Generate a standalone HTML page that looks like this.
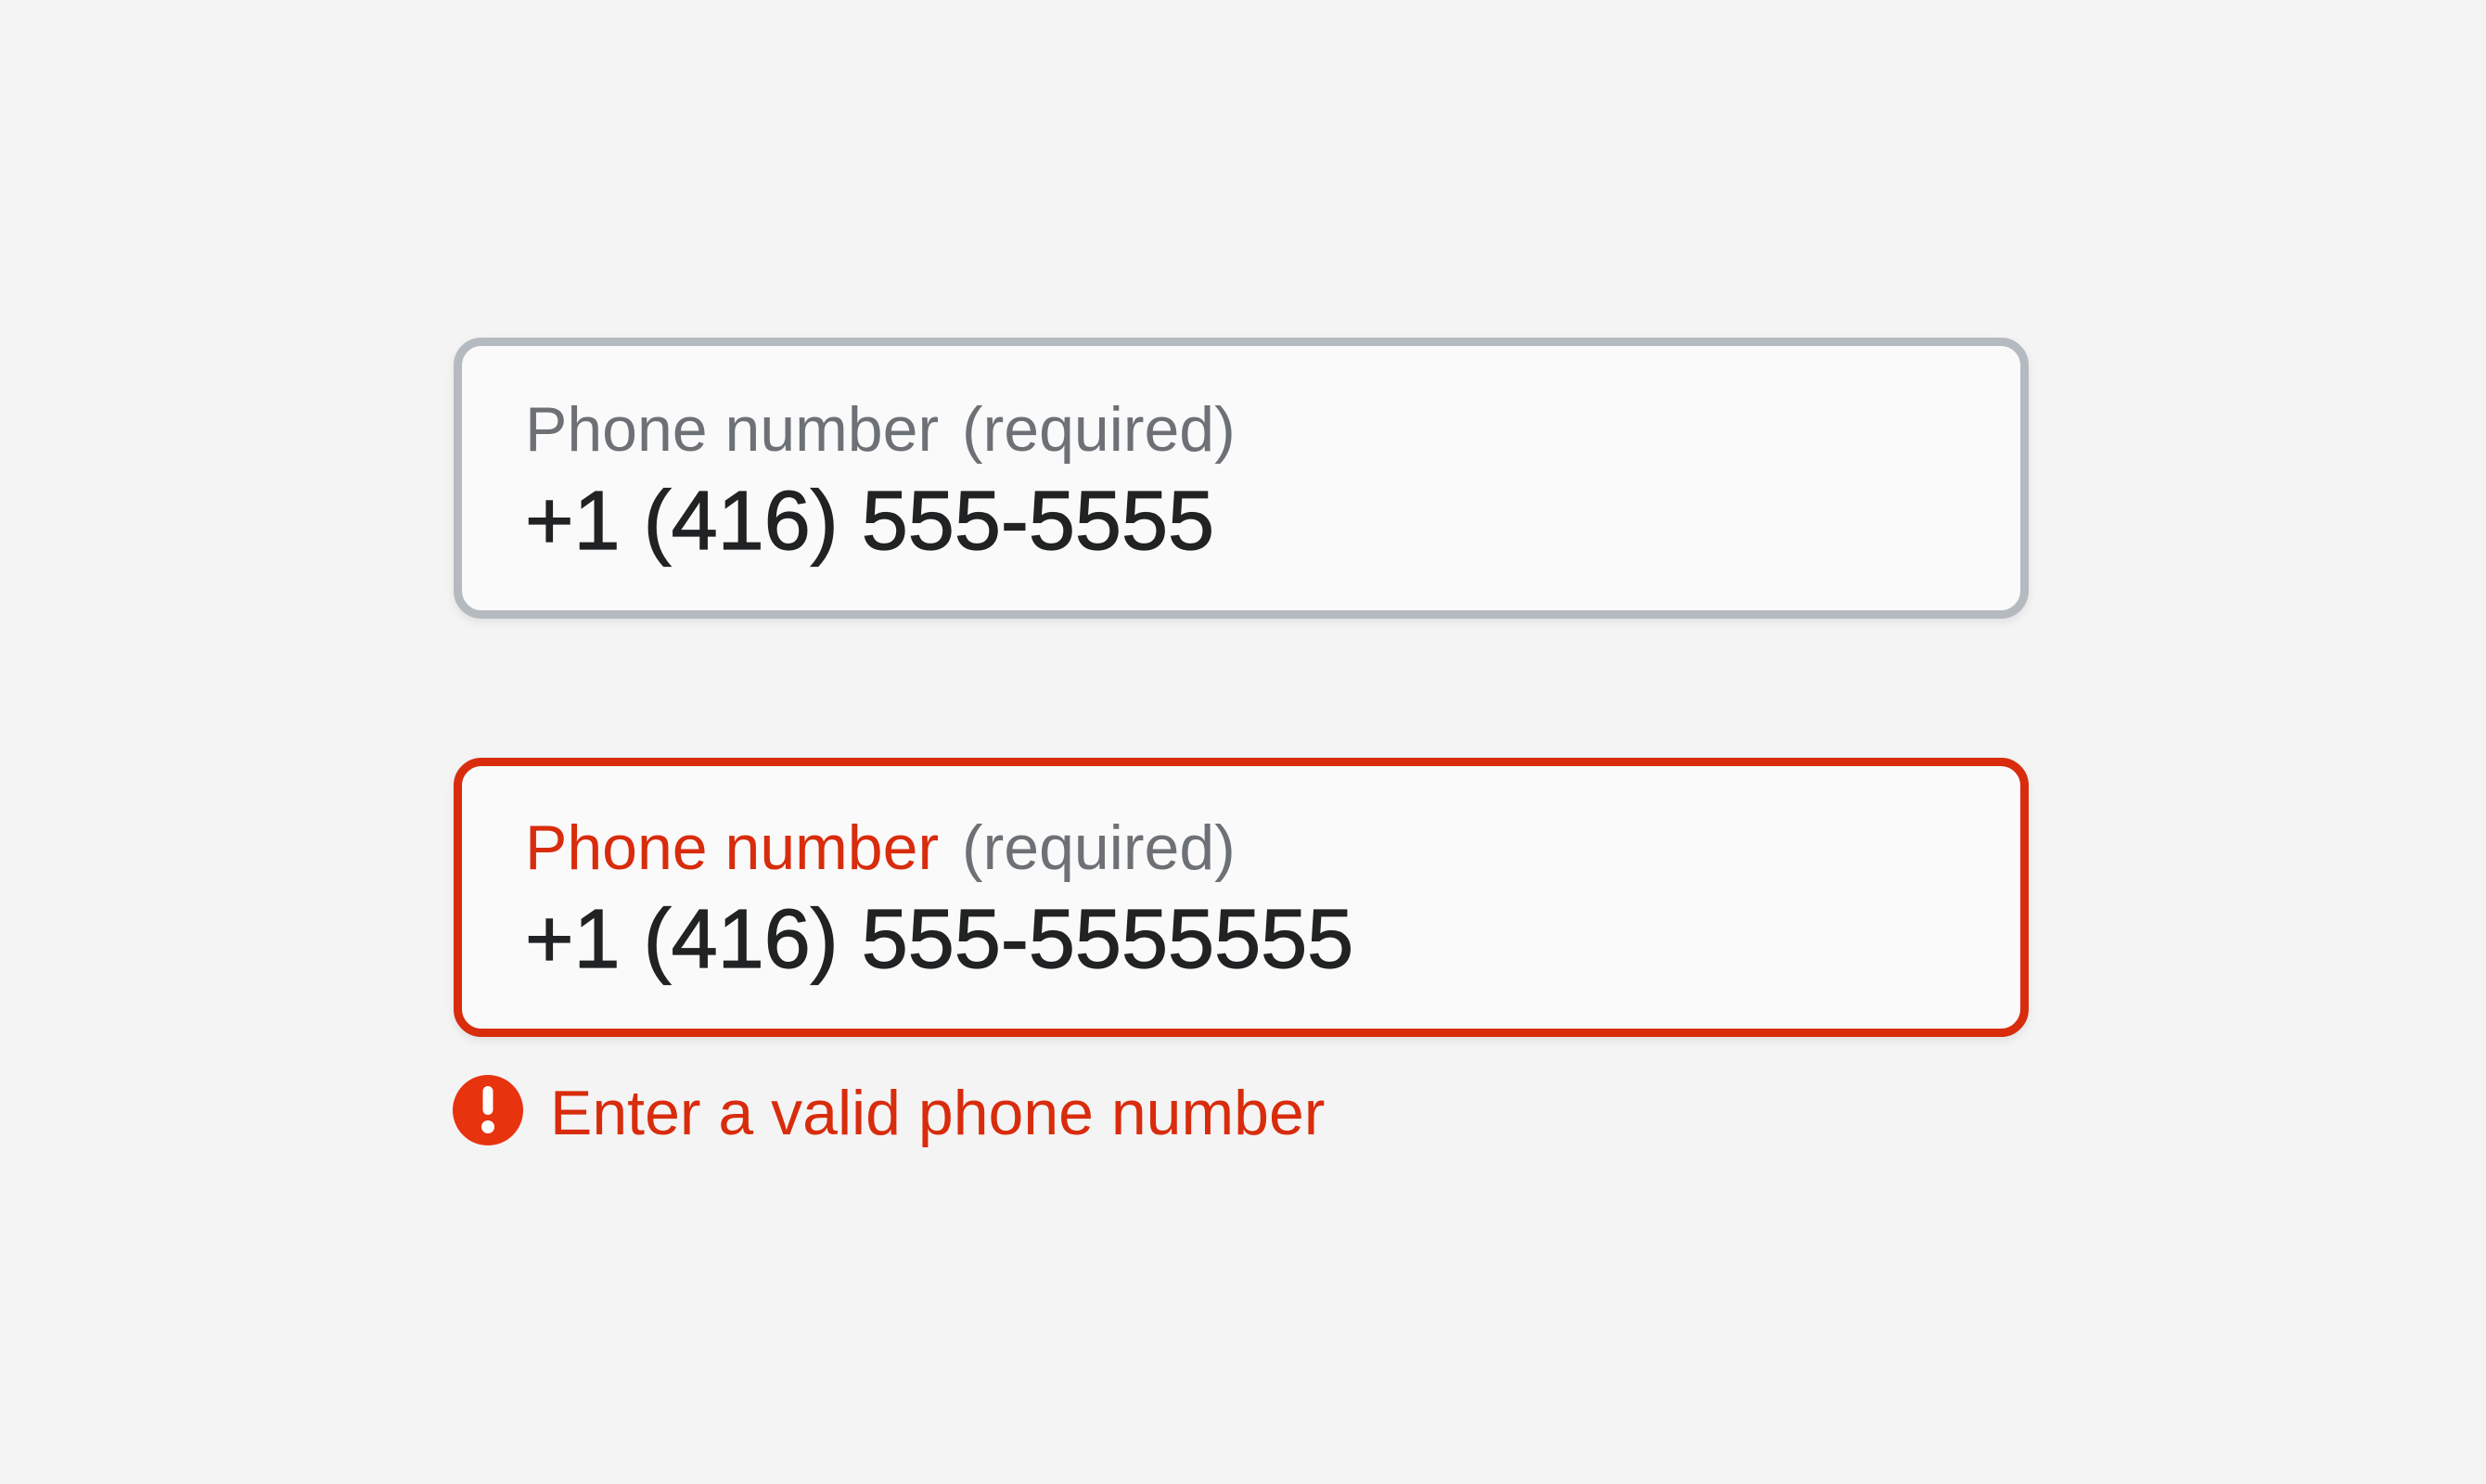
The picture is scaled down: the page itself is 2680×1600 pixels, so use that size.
<!DOCTYPE html>
<html><head><meta charset="utf-8"><style>
html,body{margin:0;padding:0}
body{width:2680px;height:1600px;background:#f4f4f4;position:relative;overflow:hidden;font-family:"Liberation Sans",sans-serif}
.box{position:absolute;left:489px;width:1698px;box-sizing:border-box;border:9px solid #b5bac0;border-radius:30px;background:#fafafa;box-shadow:0 4px 10px rgba(0,0,0,0.08)}
.t{position:absolute;line-height:1;white-space:nowrap}
.lab{font-size:68px;color:#6d7175}
.val{font-size:90px;color:#202223;-webkit-text-stroke:1.2px #202223}
.red{color:#d82c0d}
.req{margin-left:6px}
</style></head><body>
<div class="box" style="top:364px;height:303px"></div>
<div class="t lab" style="left:566px;top:429px">Phone number <span class="req">(required)</span></div>
<div class="t val" style="left:566px;top:517px">+1 (416) 555-5555</div>

<div class="box" style="top:817px;height:301px;border-color:#d82c0d"></div>
<div class="t lab" style="left:566px;top:880px"><span class="red">Phone number</span> <span class="req">(required)</span></div>
<div class="t val" style="left:566px;top:968px">+1 (416) 555-5555555</div>

<svg style="position:absolute;left:488px;top:1159px" width="76" height="76" viewBox="0 0 76 76">
<circle cx="38" cy="38" r="38" fill="#e8330f"/>
<rect x="32.5" y="12" width="11" height="31" rx="5.5" fill="#fff"/>
<circle cx="38" cy="56" r="7" fill="#fff"/>
</svg>
<div class="t red" style="left:593px;top:1166px;font-size:68px">Enter a valid phone number</div>
</body></html>
